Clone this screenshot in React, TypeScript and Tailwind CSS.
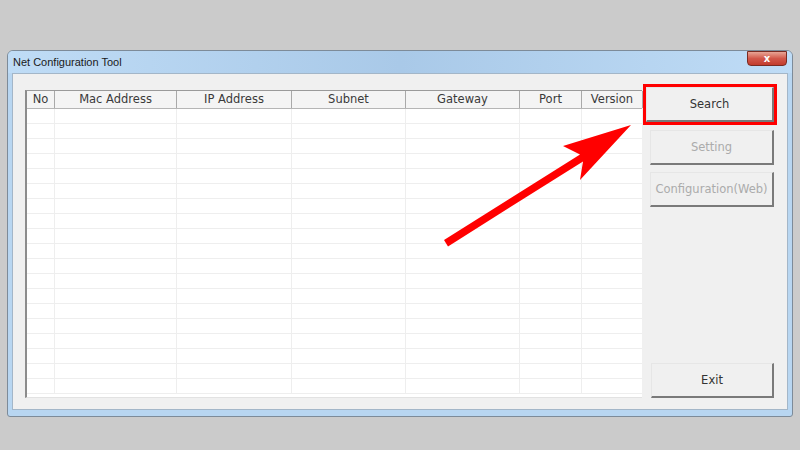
import React from "react";

const columns = [
  { label: "No", w: "w-[28px]" },
  { label: "Mac Address", w: "w-[122px]" },
  { label: "IP Address", w: "w-[115px]" },
  { label: "Subnet", w: "w-[114px]" },
  { label: "Gateway", w: "w-[114px]" },
  { label: "Port", w: "w-[62px]" },
  { label: "Version", w: "w-[61px]" },
];

const rows = Array.from({ length: 19 }, (_, i) => i);

const Btn = ({
  children,
  disabled,
  className,
}: {
  children: React.ReactNode;
  disabled?: boolean;
  className?: string;
}) => (
  <button
    className={
      "flex items-center justify-center pt-[2px] bg-[#f0f0f0] border-t border-l border-t-[#e6e6e6] border-l-[#e6e6e6] border-b-2 border-r-2 border-b-[#7a7a7a] border-r-[#7a7a7a] text-[11.5px] " +
      (disabled ? "text-[#ababab] " : "text-[#333333] ") +
      (className ?? "")
    }
  >
    {children}
  </button>
);

export default function App() {
  return (
    <div
      className="relative w-[800px] h-[450px] bg-[#cbcbcb] pt-[50px] pl-[7px] overflow-hidden"
      style={{ fontFamily: '"DejaVu Sans", Verdana, sans-serif' }}
    >
      {/* window */}
      <div className="w-[786px] h-[367px] flex flex-col border border-[#7d8b99] rounded-t-[6px] rounded-b-[3px] bg-[#b8d6f1]">
        {/* title bar */}
        <div className="relative h-[22px] flex items-center px-[5px] bg-gradient-to-r from-[#bfdcf6] via-[#a9c9e8] to-[#bfdcf6] rounded-t-[5px]">
          <span
            className="text-[11px] text-[#1a1a1a]"
            style={{ fontFamily: '"Liberation Sans", Arial, sans-serif' }}
          >
            Net Configuration Tool
          </span>
          <div className="absolute right-[5px] top-0 w-[40px] h-[15px] rounded-b-[4px] border border-[#7a2b22] bg-gradient-to-b from-[#e7a496] via-[#d2574a] to-[#c23b2c] flex items-center justify-center">
            <span className="text-[10px] font-bold text-white leading-none">x</span>
          </div>
        </div>

        {/* client area */}
        <div className="flex-1 mx-[4px] mb-[6px] flex bg-[#f0f0f0] border border-[#a3b6c8] pl-[12px] pt-[10px] pb-[11px]">
          {/* list view */}
          <div className="mt-[6px] w-[617px] h-[308px] bg-white border-l-2 border-t border-l-[#8c8c8c] border-t-[#9a9a9a] border-b border-b-[#e2e2e2] flex flex-col">
            <div className="flex h-[18px] bg-[#f4f4f4] border-b border-[#b5b5b5]">
              {columns.map((c) => (
                <div
                  key={c.label}
                  className={`${c.w} shrink-0 flex items-center justify-center pt-[1px] border-r border-[#a9a9a9] text-[11.5px] text-[#3a3a3a] leading-none`}
                >
                  {c.label}
                </div>
              ))}
            </div>
            <div className="flex-1 overflow-hidden">
              {rows.map((r) => (
                <div key={r} className="flex h-[15px] border-b border-[#eeeeee]">
                  {columns.map((c) => (
                    <div key={c.label} className={`${c.w} shrink-0 border-r border-[#eeeeee]`} />
                  ))}
                </div>
              ))}
            </div>
          </div>

          {/* buttons */}
          <div className="ml-[1px] w-[134px] flex flex-col">
            <div className="h-[41px] border-[3px] border-[#ff0000] flex">
              <Btn className="flex-1">Search</Btn>
            </div>
            <Btn disabled className="ml-[7px] mt-[5px] w-[124px] h-[35px]">
              Setting
            </Btn>
            <Btn disabled className="ml-[7px] mt-[7px] w-[124px] h-[35px]">
              Configuration(Web)
            </Btn>
            <Btn className="ml-[8px] mt-auto w-[123px] h-[35px]">Exit</Btn>
          </div>
        </div>
      </div>

      {/* annotation arrow */}
      <svg
        className="absolute left-0 top-0 pointer-events-none"
        width="800"
        height="450"
        viewBox="0 0 800 450"
      >
        <polygon
          points="444,240 580,154.4 563,146 631,125 580,180 583,161.4 448,246.4"
          fill="#ff0000"
        />
      </svg>
    </div>
  );
}
